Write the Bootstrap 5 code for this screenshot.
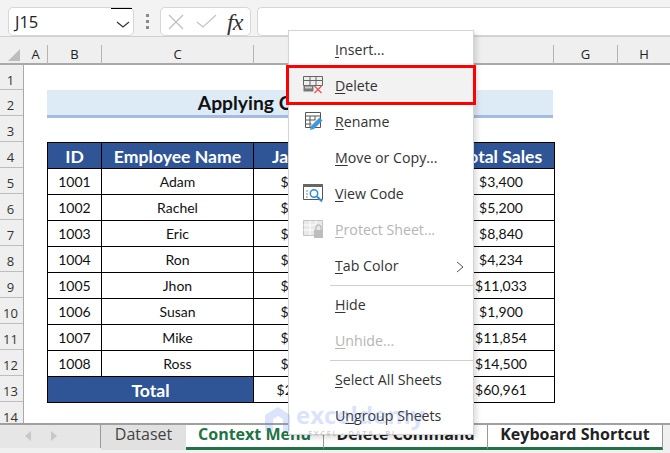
<!DOCTYPE html>
<html lang="en">
<head>
<meta charset="utf-8">
<title>Context Menu</title>
<link href="https://cdn.jsdelivr.net/npm/bootstrap@5.3.0/dist/css/bootstrap.min.css" rel="stylesheet">
<style>
html,body{margin:0;height:453px;overflow:hidden;background:#fff}
.xl-app{height:453px;width:670px;overflow:hidden;position:relative;font-family:Lato,"Liberation Sans",sans-serif;color:#000}
.xl-fbar{height:36px;background:#f3f3f3;padding-top:7px;flex:none}
.xl-box{background:#fff;border:1px solid #d6d6d6;border-radius:5px;height:29px;flex:none}
.xl-name{width:126px;margin-left:8px;font:16.5px "Open Sans",sans-serif;color:#222;padding-left:6px;line-height:27px;position:relative}
.xl-nameline{position:absolute;left:102px;top:0;width:21px;height:1px;background:#000}
.xl-dots{width:26px;gap:3px}
.xl-dots span{width:3px;height:3px;background:#8a8a8a;display:block}
.xl-tools{width:91px;padding:0 5px 0 7px}
.xl-fx{font:italic 24px/26px "Liberation Serif",serif;color:#333;margin-left:10px;letter-spacing:-1px}
.xl-input{flex:1;margin-left:6px;border-right:0;border-radius:5px 0 0 5px;background:#fff}
.xl-colhead{height:29px;background:#efefef;border-top:1px solid #d0d0d0;border-bottom:2px solid #a9a9a9;flex:none;font:13px "Open Sans",sans-serif;color:#222}
.xl-cornercell{width:24px;position:relative;flex:none}
.xl-corner{position:absolute;left:8px;top:12px;width:0;height:0;border-left:12px solid transparent;border-bottom:12px solid #bdbdbd}
.xl-col{height:19px;margin-top:8px;line-height:19px;text-align:center;border-right:1px solid #b4b4b4;flex:none}
.xl-main{flex:1;min-height:0;overflow:hidden;position:relative}
.xl-rows{width:24px;flex:none;background:#efefef;border-right:1px solid #a9a9a9;font:13px/30px "Open Sans",sans-serif;color:#333}
.xl-rowno{height:26px;border-bottom:1px solid #bdbdbd;text-align:center;padding-right:2px;overflow:hidden}
.xl-rowno:first-child{height:25px}
.xl-canvas{padding:25px 0 0 23px;background:#fff;flex:1}
.xl-title{width:506px;height:28px;background:#ddebf7;border-bottom:3px solid #a6bbdf;font:700 19.3px/26px Lato,sans-serif;text-align:center;color:#111;margin-bottom:24px}
.xl-table.table{width:507px;table-layout:fixed;margin:0;border-collapse:collapse;border:1px solid #000;color:#111;font-size:14px}
.xl-table.table>:not(caption)>*>*{padding:0;height:26px;line-height:25px;border:1px solid #000;text-align:center;vertical-align:middle;box-shadow:none;background:#fff;color:#111}
.xl-table.table>:not(caption)>*>.xl-head{background:#2f5597;color:#fff;font-weight:700;font-size:17.6px;padding-top:2px;line-height:22px;white-space:nowrap}
.xl-tabs{height:30px;flex:none;background:#f0f0f0;border-top:2px solid #a0a0a0;font:700 16px/19px "Open Sans",sans-serif;position:relative}
.xl-tabs-inner{height:25px;align-items:stretch}
.xl-nav{width:101px;background:#e6e6e6;border-right:1px solid #999;gap:18px;padding-left:25px;flex:none;margin-bottom:2px}
.xl-tab{border-right:1px solid #999;text-align:center;flex:none;background:#fff;color:#222;border-bottom:3px solid #217346;white-space:nowrap}
.xl-tab-plain{width:85px;background:#e1e1e1;color:#444;font-weight:400;border-right:0;border-bottom:0}
.xl-tab-on{width:138px;color:#217346}
.xl-tab-two{width:164px}
.xl-tab-three{width:175px}
.xl-menu{position:absolute;left:288px;top:30px;width:186px;height:405px;background:#fff;border:1px solid #d4d4d4;box-shadow:3px 3px 5px rgba(0,0,0,.13);font:14.2px "Open Sans",sans-serif;color:#333;margin:0;padding:1px 0 0;list-style:none}
.xl-item{height:36px;padding-left:46px;line-height:35px;position:relative;white-space:nowrap}
.xl-item u{text-underline-offset:2px}
.xl-item svg{position:absolute;left:14px;top:7px}
.xl-off{color:#b5b5b5}
.xl-sel{background:#f2f2f2;outline:3px solid #f00;height:34px;margin-bottom:2px;z-index:1}
.xl-sel svg{top:6px}
.xl-sep{height:1px;background:#cfcfcf;margin:1px 0 1px 41px}
.xl-more{position:absolute;right:9px;top:13px}
.xl-mark{position:absolute;left:263px;top:402px;width:150px;height:36px;pointer-events:none}
.xl-markword{position:absolute;left:33px;top:0;font:700 24px/26px "Open Sans",sans-serif;color:rgba(90,130,230,.24)}
.xl-marksub{position:absolute;left:45px;top:26px;font:700 7.5px/10px "Open Sans",sans-serif;letter-spacing:1.5px;color:rgba(120,120,120,.32);white-space:nowrap}
.xl-markicon{position:absolute;left:2px;top:3px}
</style>
</head>
<body>
<div class="xl-app d-flex flex-column">
  <div class="xl-fbar d-flex">
    <div class="xl-box xl-name">J15<span class="xl-nameline"></span>
      <svg width="14" height="8" viewBox="0 0 14 8" style="position:absolute;left:107px;top:13px"><path d="M1 1l6 5 6-5" fill="none" stroke="#333" stroke-width="1.2"/></svg>
    </div>
    <div class="xl-dots d-flex flex-column align-items-center justify-content-center"><span></span><span></span><span></span></div>
    <div class="xl-box xl-tools d-flex align-items-center">
      <svg width="16" height="16" viewBox="0 0 16 16"><path d="M1 1l14 14M15 1L1 15" stroke="#bdbdbd" stroke-width="1.2" fill="none"/></svg>
      <svg width="21" height="15" viewBox="0 0 21 15" style="margin-left:12px"><path d="M1 8l6 5L20 1" stroke="#c4c4c4" stroke-width="1.2" fill="none"/></svg>
      <span class="xl-fx">fx</span>
    </div>
    <div class="xl-box xl-input"></div>
  </div>
  <div class="xl-colhead d-flex">
    <div class="xl-cornercell"><span class="xl-corner"></span></div>
    <div class="xl-col" style="width:24px">A</div>
    <div class="xl-col" style="width:54px">B</div>
    <div class="xl-col" style="width:152px">C</div>
    <div class="xl-col" style="width:300px">F</div>
    <div class="xl-col" style="width:64px">G</div>
    <div class="xl-col" style="width:52px;border-right:0">H</div>
  </div>
  <div class="xl-main d-flex">
    <div class="xl-rows">
      <div class="xl-rowno">1</div><div class="xl-rowno">2</div><div class="xl-rowno">3</div><div class="xl-rowno">4</div><div class="xl-rowno">5</div><div class="xl-rowno">6</div><div class="xl-rowno">7</div><div class="xl-rowno">8</div><div class="xl-rowno">9</div><div class="xl-rowno">10</div><div class="xl-rowno">11</div><div class="xl-rowno">12</div><div class="xl-rowno">13</div><div class="xl-rowno">14</div>
    </div>
    <div class="xl-canvas">
      <div class="xl-title">Applying Context Menu</div>
      <table class="table xl-table">
        <colgroup><col style="width:54px"><col style="width:152px"><col style="width:98px"><col style="width:96px"><col style="width:107px"></colgroup>
        <thead><tr><th class="xl-head">ID</th><th class="xl-head">Employee Name</th><th class="xl-head">January</th><th class="xl-head">February</th><th class="xl-head">Total Sales</th></tr></thead>
        <tbody>
          <tr><td>1001</td><td>Adam</td><td>$1,400</td><td>$2,000</td><td>$3,400</td></tr>
          <tr><td>1002</td><td>Rachel</td><td>$2,200</td><td>$3,000</td><td>$5,200</td></tr>
          <tr><td>1003</td><td>Eric</td><td>$3,840</td><td>$5,000</td><td>$8,840</td></tr>
          <tr><td>1004</td><td>Ron</td><td>$1,234</td><td>$3,000</td><td>$4,234</td></tr>
          <tr><td>1005</td><td>Jhon</td><td>$4,033</td><td>$7,000</td><td>$11,033</td></tr>
          <tr><td>1006</td><td>Susan</td><td>$1,000</td><td>$900</td><td>$1,900</td></tr>
          <tr><td>1007</td><td>Mike</td><td>$4,854</td><td>$7,000</td><td>$11,854</td></tr>
          <tr><td>1008</td><td>Ross</td><td>$6,500</td><td>$8,000</td><td>$14,500</td></tr>
          <tr><td colspan="2" class="xl-head">Total</td><td>$25,061</td><td>$35,900</td><td>$60,961</td></tr>
        </tbody>
      </table>
    </div>
  </div>
  <div class="xl-tabs">
    <div class="xl-tabs-inner d-flex">
      <div class="xl-nav d-flex align-items-center">
        <svg width="7" height="11" viewBox="0 0 7 11"><path d="M6 0v10L0 5z" fill="#c8c8c8"/></svg>
        <svg width="7" height="11" viewBox="0 0 7 11"><path d="M1 0v10l6-5z" fill="#c8c8c8"/></svg>
      </div>
      <div class="xl-tab xl-tab-plain">Dataset</div>
      <div class="xl-tab xl-tab-on">Context Menu</div>
      <div class="xl-tab xl-tab-two">Delete Command</div>
      <div class="xl-tab xl-tab-three">Keyboard Shortcut</div>
    </div>
  </div>
  <ul class="xl-menu">
    <li class="xl-item"><u>I</u>nsert...</li>
    <li class="xl-item xl-sel">
      <svg width="21" height="21" viewBox="0 0 21 21"><path d="M.5 2.500h19v9H.5zM.5 6.500h19M7 2.500v9M13 2.500v9" fill="#eee" stroke="#666" stroke-width="1"/><path d="M.5 11.500h10v6H.5z" fill="#777"/><path d="M2 12.500h7v2H2z" fill="#ccc"/><path d="M11.500 12l7 7M18.500 12l-7 7" stroke="#f05050" stroke-width="1.300" fill="none"/></svg>
      <u>D</u>elete</li>
    <li class="xl-item">
      <svg width="21" height="21" viewBox="0 0 21 21"><path d="M2.500 1.500h15v15h-15zM2.500 5h15M2.500 9h10M2.500 13h6M7 5v11.500M12 5v4" fill="none" stroke="#555" stroke-width="1"/><path d="M7 19l1-4 8.500-8.500 3 3L11 18z" fill="#3f97dc"/></svg>
      <u>R</u>ename</li>
    <li class="xl-item"><u>M</u>ove or Copy...</li>
    <li class="xl-item">
      <svg width="21" height="21" viewBox="0 0 21 21"><path d="M.5 1.500h19v15H.5z" fill="#fff" stroke="#555"/><path d="M0 1h20v3H0z" fill="#666"/><path d="M3 8h2M3 11h2M3 14h2" stroke="#888"/><circle cx="11" cy="10.500" r="3.700" fill="none" stroke="#2f8fd8" stroke-width="1.500"/><path d="M14 13.500l5 5" stroke="#2f8fd8" stroke-width="2"/></svg>
      <u>V</u>iew Code</li>
    <li class="xl-item xl-off">
      <svg width="21" height="21" viewBox="0 0 21 21"><path d="M.5 1.500h19v15H.5z" fill="#e8e8e8" stroke="#c4c4c4"/><path d="M.5 6h18M.5 11h10M7 1.500v15M13 1.500v6" fill="none" stroke="#fff"/><path d="M11 11h9v8h-9z" fill="#bdbdbd"/><path d="M13 11V8.500a2.500 2.500 0 015 0V11" fill="none" stroke="#bdbdbd" stroke-width="1.300"/></svg>
      <u>P</u>rotect Sheet...</li>
    <li class="xl-item"><u>T</u>ab Color
      <svg class="xl-more" style="left:auto;top:13px" width="8" height="12" viewBox="0 0 8 12"><path d="M1 1l6 5-6 5" fill="none" stroke="#555" stroke-width="1"/></svg></li>
    <li class="xl-sep"></li>
    <li class="xl-item"><u>H</u>ide</li>
    <li class="xl-item xl-off"><u>U</u>nhide...</li>
    <li class="xl-sep"></li>
    <li class="xl-item"><u>S</u>elect All Sheets</li>
    <li class="xl-item">U<u>n</u>group Sheets</li>
  </ul>
  <div class="xl-mark">
    <svg class="xl-markicon" width="30" height="30" viewBox="0 0 30 30"><path d="M0 10L13 2l12 8v16h-7V14l-5-3-5 3v12H0z" fill="rgba(90,130,230,.22)"/></svg>
    <span class="xl-markword">exceldemy</span>
    <span class="xl-marksub">EXCEL · DATA · BI</span>
  </div>
</div>
<script src="https://cdn.jsdelivr.net/npm/bootstrap@5.3.0/dist/js/bootstrap.bundle.min.js"></script>
</body>
</html>
